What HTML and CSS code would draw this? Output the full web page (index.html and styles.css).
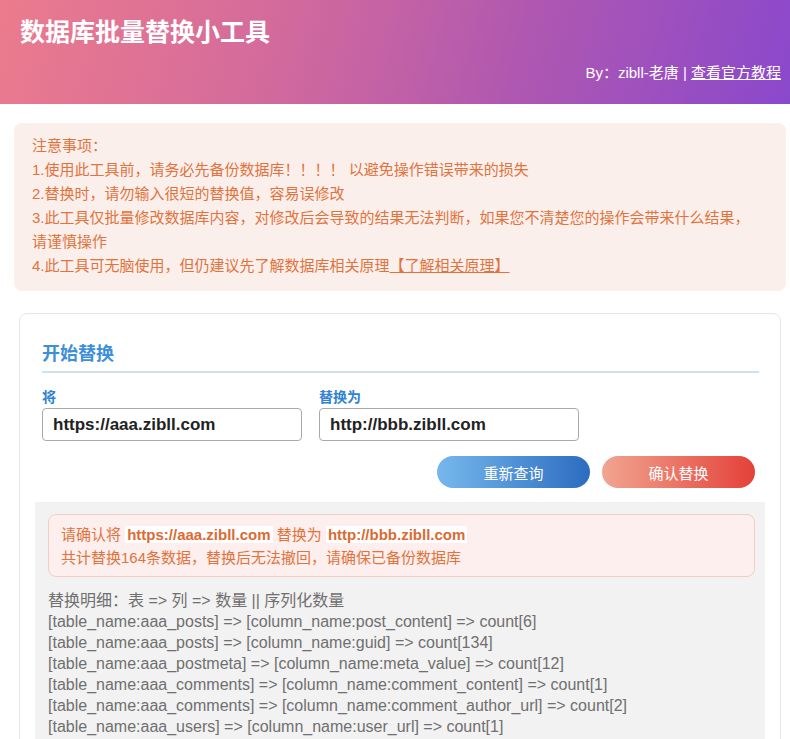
FILE: index.html
```html
<!DOCTYPE html>
<html lang="zh-CN">
<head>
    <meta charset="UTF-8">
    <meta name="viewport" content="width=device-width, initial-scale=1.0">
    <title>数据库批量替换小工具</title>
    <link rel="stylesheet" href="styles.css">
</head>
<body>

    <div class="header">
        <h1>数据库批量替换小工具</h1>
        <div class="byline">By：zibll-老唐 | <a href="#">查看官方教程</a></div>
    </div>

    <div class="main">
        <!-- 注意事项 -->
        <div class="notice">
            <div>注意事项：</div>
            <div>1.使用此工具前，请务必先备份数据库！！！！ 以避免操作错误带来的损失</div>
            <div>2.替换时，请勿输入很短的替换值，容易误修改</div>
            <div>3.此工具仅批量修改数据库内容，对修改后会导致的结果无法判断，如果您不清楚您的操作会带来什么结果，请谨慎操作</div>
            <div>4.此工具可无脑使用，但仍建议先了解数据库相关原理<a href="#">【了解相关原理】</a></div>
        </div>

        <div class="card">
            <div class="form">
                <h2>开始替换</h2>
                <div class="fields">
                    <div class="field">
                        <label for="from">将</label>
                        <input type="text" id="from" value="https://aaa.zibll.com">
                    </div>
                    <div class="field">
                        <label for="to">替换为</label>
                        <input type="text" id="to" value="http://bbb.zibll.com">
                    </div>
                </div>
                <div class="actions">
                    <button class="btn btn-blue">重新查询</button>
                    <button class="btn btn-red">确认替换</button>
                </div>
            </div>

            <div class="result">
                <div class="alert">
                    <div>请确认将 <b>https://aaa.zibll.com</b> 替换为 <b>http://bbb.zibll.com</b></div>
                    <div>共计替换164条数据，替换后无法撤回，请确保已备份数据库</div>
                </div>
                <div class="detail">
                    <div>替换明细：表 =&gt; 列 =&gt; 数量 || 序列化数量</div>
                    <div>[table_name:aaa_posts] =&gt; [column_name:post_content] =&gt; count[6]</div>
                    <div>[table_name:aaa_posts] =&gt; [column_name:guid] =&gt; count[134]</div>
                    <div>[table_name:aaa_postmeta] =&gt; [column_name:meta_value] =&gt; count[12]</div>
                    <div>[table_name:aaa_comments] =&gt; [column_name:comment_content] =&gt; count[1]</div>
                    <div>[table_name:aaa_comments] =&gt; [column_name:comment_author_url] =&gt; count[2]</div>
                    <div>[table_name:aaa_users] =&gt; [column_name:user_url] =&gt; count[1]</div>
                </div>
            </div>
        </div>
    </div>

</body>
</html>
```

FILE: styles.css
```css
body { margin: 0; font-family: "Liberation Sans", "Noto Sans CJK SC", sans-serif; background: #fff; }

/* Header */
.header {
    height: 104px;
    box-sizing: border-box;
    padding: 17px 9px 0 20px;
    background: linear-gradient(105deg, #ec7b8d 0%, #d36a9c 35%, #b058b0 65%, #8a48cc 100%);
    color: #fff;
}
.header h1 { margin: 0; font-size: 25px; line-height: 30px; font-weight: bold; }
.byline { text-align: right; font-size: 15px; line-height: 20px; margin-top: 16px; }
.byline a { color: #fff; }

.main { padding: 19px 4px 0 14px; }

/* Notice */
.notice {
    background: #fbefec;
    border-radius: 8px;
    padding: 11px 30px 13px 18px;
    color: #e2733c;
    font-size: 15px;
    line-height: 24px;
}
.notice a { color: #e2733c; }

/* Card */
.card {
    margin: 22px 5px 0;
    border: 1px solid #e6e6e6;
    border-radius: 8px;
    padding: 0 15px;
}
.form { padding: 0 6px 0 7px; }
.form h2 {
    margin: 0;
    padding: 27px 0 4px;
    font-size: 18px;
    line-height: 26px;
    color: #3c8fd8;
    border-bottom: 2px solid #cfe0ee;
}
.fields { display: flex; gap: 17px; margin-top: 14px; }
.field label { display: block; font-size: 14px; line-height: 20px; font-weight: bold; color: #2f82d2; margin-bottom: 1px; }
.field input {
    width: 260px;
    height: 33px;
    box-sizing: border-box;
    border: 1px solid #a9a9a9;
    border-radius: 4px;
    padding: 0 10px;
    font-family: "Liberation Sans", sans-serif;
    font-size: 17px;
    font-weight: bold;
    color: #222;
}
.actions { display: flex; justify-content: flex-end; gap: 12px; margin: 15px 4px 0 0; }
.btn {
    width: 153px;
    height: 32px;
    border: none;
    border-radius: 16px;
    color: #fff;
    font-family: "Noto Sans CJK SC", sans-serif;
    font-size: 15px;
    cursor: pointer;
}
.btn-blue { background: linear-gradient(90deg, #76b8ec, #2c6cc0); }
.btn-red { background: linear-gradient(90deg, #f1a590, #e4413a); }

/* Result */
.result { margin-top: 14px; background: #f2f2f2; padding: 12px 10px 30px 13px; }
.alert {
    background: #fcefee;
    border: 1px solid #f2cdc6;
    border-radius: 8px;
    padding: 8px 12px 7px;
    color: #e2733c;
    font-size: 15px;
    line-height: 23px;
}
.alert b { background: #fff; padding: 0 2px; color: #dc6a32; }
.detail { margin-top: 13px; color: #6f6f6f; font-size: 16px; line-height: 21px; }
```
